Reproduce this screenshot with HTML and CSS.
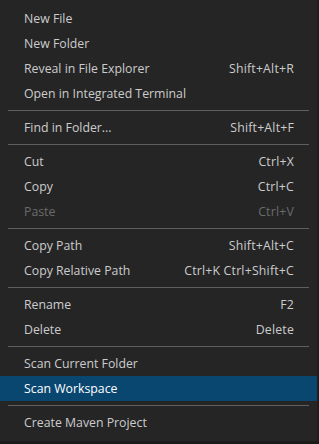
FILE: index.html
```html
<!DOCTYPE html>
<html lang="en">
<head>
  <meta charset="UTF-8">
  <meta name="viewport" content="width=device-width, initial-scale=1.0">
  <title>Explorer Context Menu</title>
  <link rel="stylesheet" href="styles.css">
</head>
<body>
  <div class="menu">
    <div class="menu-item"><span class="label">New File</span></div>
    <div class="menu-item"><span class="label">New Folder</span></div>
    <div class="menu-item"><span class="label">Reveal in File Explorer</span><span class="keys">Shift+Alt+R</span></div>
    <div class="menu-item"><span class="label">Open in Integrated Terminal</span></div>
    <div class="separator"></div>
    <div class="menu-item"><span class="label">Find in Folder...</span><span class="keys">Shift+Alt+F</span></div>
    <div class="separator"></div>
    <div class="menu-item"><span class="label">Cut</span><span class="keys">Ctrl+X</span></div>
    <div class="menu-item"><span class="label">Copy</span><span class="keys">Ctrl+C</span></div>
    <div class="menu-item disabled"><span class="label">Paste</span><span class="keys">Ctrl+V</span></div>
    <div class="separator"></div>
    <div class="menu-item"><span class="label">Copy Path</span><span class="keys">Shift+Alt+C</span></div>
    <div class="menu-item"><span class="label">Copy Relative Path</span><span class="keys">Ctrl+K Ctrl+Shift+C</span></div>
    <div class="separator"></div>
    <div class="menu-item"><span class="label">Rename</span><span class="keys">F2</span></div>
    <div class="menu-item"><span class="label">Delete</span><span class="keys">Delete</span></div>
    <div class="separator"></div>
    <div class="menu-item"><span class="label">Scan Current Folder</span></div>
    <div class="menu-item active"><span class="label">Scan Workspace</span></div>
    <div class="separator"></div>
    <div class="menu-item"><span class="label">Create Maven Project</span></div>
  </div>
  <div class="under"></div>
</body>
</html>
```

FILE: styles.css
```css
body {
  margin: 0;
  background-color: #1b1b1b;
  font-family: "Open Sans", "Noto Sans", sans-serif;
  font-size: 12.3px;
  color: #cccccc;
  width: 319px;
  height: 444px;
  overflow: hidden;
}

.menu {
  width: 318px;
  background-color: #252526;
  border-right: 1px solid #1f1f1f;
  padding: 6px 0 6px 0;
  box-sizing: border-box;
}

.menu-item {
  display: flex;
  align-items: center;
  justify-content: space-between;
  height: 25px;
  padding: 0 23px 0 24px;
}

.menu-item.active {
  background-color: #094771;
  color: #ffffff;
}

.menu-item.disabled {
  color: #6b6b6b;
}

.keys {
  white-space: nowrap;
  letter-spacing: 0.2px;
}

.separator {
  height: 1px;
  margin: 4px 8px;
  background-color: #5f5f60;
}

.under {
  height: 4px;
  background-color: #1b1b1b;
}
```
